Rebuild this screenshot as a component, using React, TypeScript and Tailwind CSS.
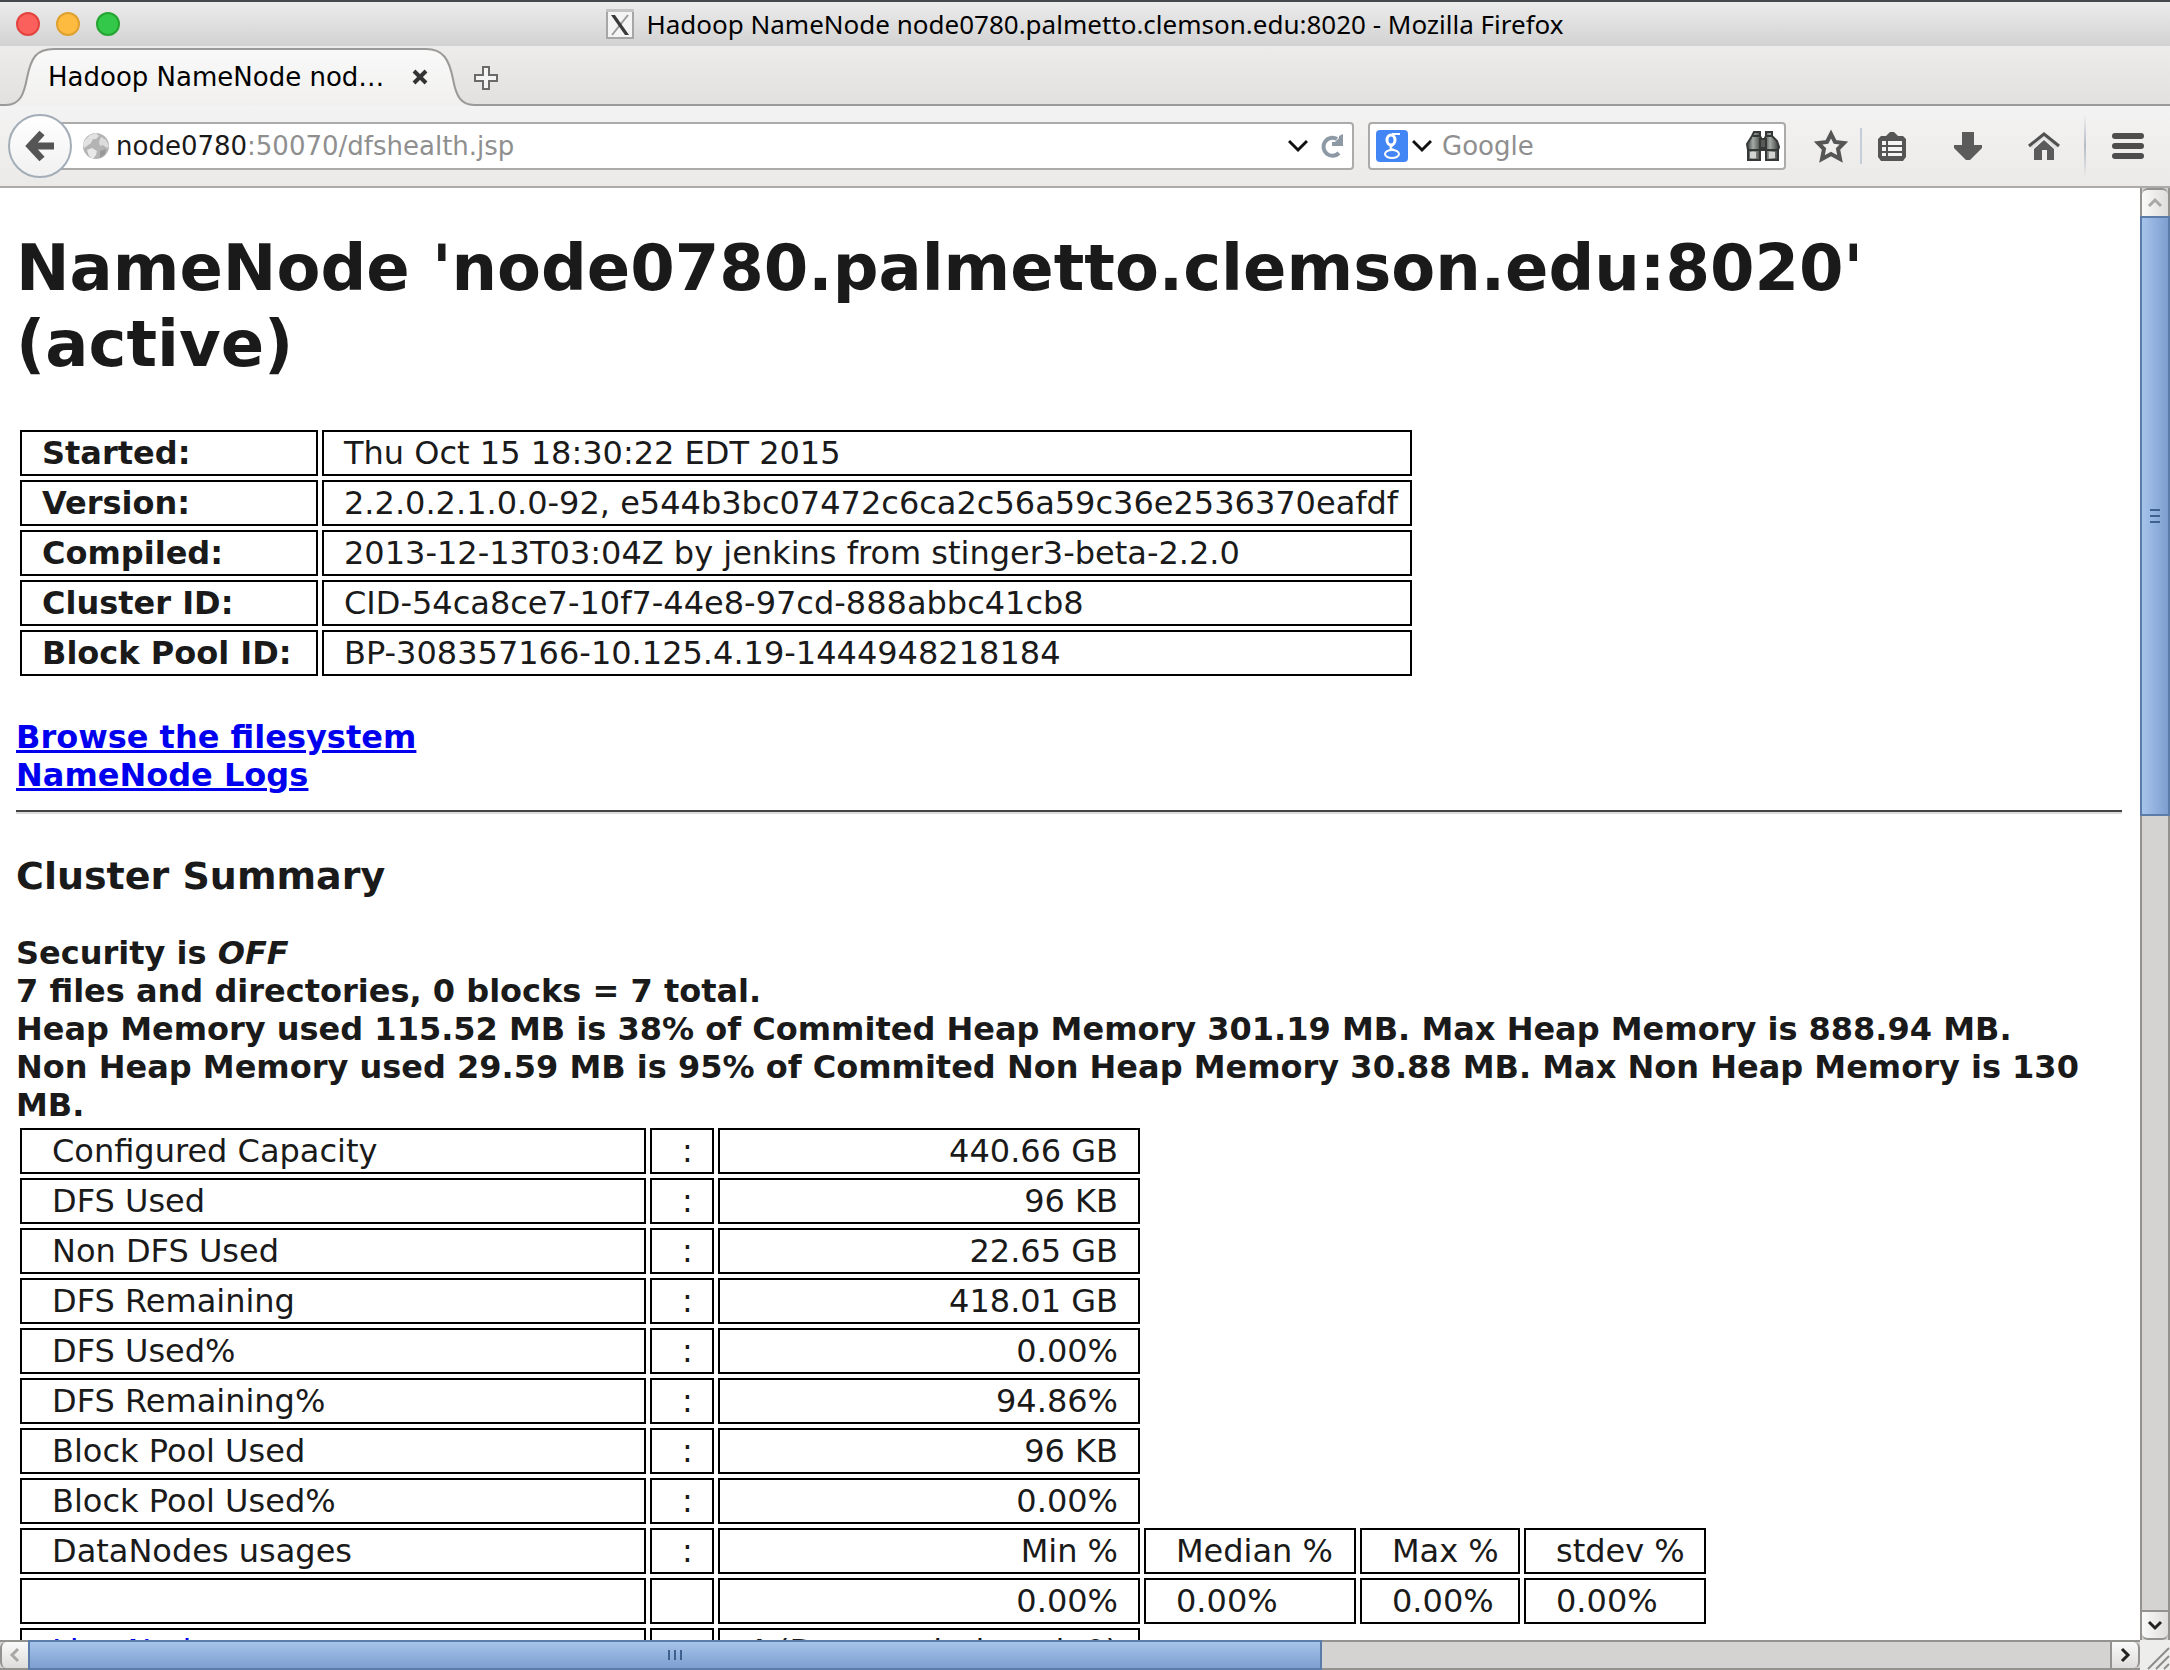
import React from "react";

const info: [string, string][] = [
  ["Started:", "Thu Oct 15 18:30:22 EDT 2015"],
  ["Version:", "2.2.0.2.1.0.0-92, e544b3bc07472c6ca2c56a59c36e2536370eafdf"],
  ["Compiled:", "2013-12-13T03:04Z by jenkins from stinger3-beta-2.2.0"],
  ["Cluster ID:", "CID-54ca8ce7-10f7-44e8-97cd-888abbc41cb8"],
  ["Block Pool ID:", "BP-308357166-10.125.4.19-1444948218184"],
];

const summary: string[][] = [
  ["Configured Capacity", ":", "440.66 GB"],
  ["DFS Used", ":", "96 KB"],
  ["Non DFS Used", ":", "22.65 GB"],
  ["DFS Remaining", ":", "418.01 GB"],
  ["DFS Used%", ":", "0.00%"],
  ["DFS Remaining%", ":", "94.86%"],
  ["Block Pool Used", ":", "96 KB"],
  ["Block Pool Used%", ":", "0.00%"],
  ["DataNodes usages", ":", "Min %", "Median %", "Max %", "stdev %"],
  ["", "", "0.00%", "0.00%", "0.00%", "0.00%"],
  ["Live Nodes", ":", "4 (Decommissioned: 0)"],
];

function TitleBar() {
  return (
    <header className="relative flex h-[46px] shrink-0 items-center justify-center border-t-2 border-[#45494d] bg-linear-to-b from-[#ececec] to-[#d2d2d2]">
      <div className="absolute left-4 flex gap-4">
        <button aria-label="Close window" className="size-6 rounded-full border-2 border-[#e2443f] bg-[#fc605c]" />
        <button aria-label="Minimize window" className="size-6 rounded-full border-2 border-[#dfa02f] bg-[#fdbc40]" />
        <button aria-label="Zoom window" className="size-6 rounded-full border-2 border-[#25a532] bg-[#34c84a]" />
      </div>
      <svg className="mr-3 h-[30px] w-7" viewBox="0 0 28 30" aria-hidden="true">
        <rect x="1" y="1" width="26" height="28" fill="#f4f4f4" stroke="#a6a6a6" strokeWidth="2" />
        <rect x="0" y="0" width="28" height="3" fill="#c4c4c4" />
        <path d="M22 6 6 26" stroke="#9a9a9a" strokeWidth="2" />
        <path d="M5 6h4l14 20h-4z" fill="#3a3a3a" />
      </svg>
      <h1 className="font-['Noto_Sans'] text-[26px] leading-8 text-black">
        Hadoop NameNode node0780.palmetto.clemson.edu:8020 - Mozilla Firefox
      </h1>
    </header>
  );
}

function TabStrip() {
  return (
    <nav className="flex h-[60px] shrink-0 border-b-2 border-[#9b9a99] bg-linear-to-b from-[#edecea] to-[#e2e1df]">
      <div className="relative h-[60px] w-[476px]">
        <svg className="absolute inset-0" width="476" height="60" viewBox="0 0 476 60" aria-hidden="true">
          <defs>
            <linearGradient id="tab" x1="0" y1="0" x2="0" y2="1">
              <stop offset="0" stopColor="#f9f9f9" />
              <stop offset="1" stopColor="#f1f0ef" />
            </linearGradient>
          </defs>
          <path
            d="M0 59H6C20 59 24 48 27 32C31 12 36 3 54 3H426C443 3 449 13 453 33C456 50 461 59 474 59V60H0Z"
            fill="url(#tab)"
          />
          <path
            d="M0 59H6C20 59 24 48 27 32C31 12 36 3 54 3H426C443 3 449 13 453 33C456 50 461 59 474 59H476"
            fill="none"
            stroke="#9b9a99"
            strokeWidth="2"
          />
        </svg>
        <div className="relative flex h-full items-center pl-12 pt-[2px]">
          <span className="w-[352px] whitespace-nowrap text-[26px] leading-8 text-black">Hadoop NameNode nod…</span>
          <button aria-label="Close tab" className="ml-3">
            <svg width="16" height="18" viewBox="0 0 16 18" aria-hidden="true">
              <path d="M2 3 14 15M14 3 2 15" stroke="#333" strokeWidth="4" />
            </svg>
          </button>
        </div>
      </div>
      <button aria-label="New tab" className="mt-[6px] -ml-[2px] self-center">
        <svg width="24" height="26" viewBox="0 0 24 26" aria-hidden="true">
          <path
            d="M9 2h6v8h8v6h-8v8H9v-8H1v-6h8z"
            fill="#f4f4f4"
            stroke="#6a6a6a"
            strokeWidth="2"
          />
        </svg>
      </button>
    </nav>
  );
}

function Chevron() {
  return (
    <svg width="20" height="14" viewBox="0 0 20 14" aria-hidden="true">
      <path d="M1 2 10 11 19 2" fill="none" stroke="#111" strokeWidth="3" />
    </svg>
  );
}

function Toolbar() {
  return (
    <div className="flex h-[82px] shrink-0 items-center border-b-2 border-[#acabaa] bg-linear-to-b from-[#f4f3f3] to-[#ebeae8] pl-2">
      <button
        aria-label="Back"
        className="relative z-10 flex size-16 shrink-0 items-center justify-center rounded-full border-2 border-[#a3adb8] bg-linear-to-b from-white to-[#f1f1f1]"
      >
        <svg width="30" height="32" viewBox="0 0 30 32" aria-hidden="true">
          <path d="M17 3 5 16 17 29M6 16H29" fill="none" stroke="#555" strokeWidth="7" />
        </svg>
      </button>
      <form className="-ml-4 flex h-12 min-w-0 flex-1 items-center rounded-r border-2 border-[#acabaa] bg-white pl-6 pr-2">
        <svg className="shrink-0" width="28" height="28" viewBox="0 0 28 28" aria-hidden="true">
          <circle cx="14" cy="14" r="13" fill="#b4b4b4" />
          <path d="M3 8 8 3 14 1 17 4 14 7 11 7 9 11 5 14 2 16 1 12Z" fill="#e2e2e2" />
          <path d="M19 5 24 8 27 14 25 16 21 13 18 14 17 10Z" fill="#dcdcdc" />
          <path d="M5 18 10 16 15 19 14 23 11 27 7 24Z" fill="#e8e8e8" />
          <path d="M18 19 24 17 23 22 18 26Z" fill="#989898" />
        </svg>
        <label className="relative ml-[6px] flex h-full min-w-0 flex-1 items-center text-[26px] leading-8">
          <span className="pointer-events-none absolute text-[#1a1a1a]">
            node0780<span className="text-[#8f8f8f]">:50070/dfshealth.jsp</span>
          </span>
          <input aria-label="Address" className="h-full w-full bg-transparent outline-none" />
        </label>
        <button type="button" aria-label="Show history">
          <Chevron />
        </button>
        <button type="button" aria-label="Reload" className="ml-3">
          <svg width="24" height="26" viewBox="0 0 24 26" aria-hidden="true">
            <path d="M19 20A9 9 0 1 1 17 6" fill="none" stroke="#8d99a5" strokeWidth="4" />
            <path d="M23 1V13H12V9H15L19 5V3Z" fill="#8d99a5" />
          </svg>
        </button>
      </form>
      <form className="ml-[14px] flex h-12 w-[418px] shrink-0 items-center rounded border-2 border-[#acabaa] bg-white pl-[6px] pr-1">
        <button type="button" aria-label="Choose search engine" className="flex items-center gap-1">
          <span className="flex size-8 items-center justify-center rounded-sm bg-[#4285f4]">
            <svg width="20" height="28" viewBox="0 0 20 28" fill="none" stroke="#fff" aria-hidden="true">
              <ellipse cx="9" cy="8" rx="4" ry="5" strokeWidth="3" />
              <path d="M10 2H18M11 13C7 15 8 17 12 18" strokeWidth="2" />
              <ellipse cx="10" cy="22" rx="7" ry="4" strokeWidth="2" />
            </svg>
          </span>
          <Chevron />
        </button>
        <input
          aria-label="Search"
          placeholder="Google"
          className="ml-[10px] min-w-0 flex-1 bg-transparent text-[26px] leading-8 outline-none placeholder:text-[#8f8f8f]"
        />
        <button type="button" aria-label="Find">
          <svg width="34" height="32" viewBox="0 0 34 32" aria-hidden="true">
            <defs>
              <linearGradient id="lens" x1="0" y1="0" x2="1" y2="0">
                <stop offset="0" stopColor="#3a3f3c" />
                <stop offset="0.4" stopColor="#a5aba6" />
                <stop offset="1" stopColor="#363936" />
              </linearGradient>
            </defs>
            <g stroke="#353836" strokeWidth="2">
              <path d="M8 2h6v4l2 4v10h-2v10H2V20l-1-6 5-8Z" fill="url(#lens)" />
              <path d="M20 2h6v4l5 5 2 6-1 3v10H20V20h-2V10l2-4Z" fill="url(#lens)" />
              <rect x="14" y="9" width="6" height="9" fill="#555a57" />
              <path d="M2 20H14M20 20H32M7 6h7M20 6h7" />
            </g>
            <path d="M4 22h6v6H4zM23 22h6v6h-6z" fill="#d2d5d2" />
          </svg>
        </button>
      </form>
      <div className="ml-6 flex shrink-0 items-center">
        <button aria-label="Bookmark this page" className="mx-1">
          <svg width="34" height="34" viewBox="0 0 34 34" aria-hidden="true">
            <path
              d="M17 5 21 13 30 14 24 20 26 30 17 25 8 30 10 20 4 14 13 13Z"
              fill="none"
              stroke="#555"
              strokeWidth="4"
            />
          </svg>
        </button>
        <div className="ml-2 h-9 w-[2px] bg-[#c5ced8]" />
        <button aria-label="Bookmarks" className="ml-4">
          <svg width="28" height="30" viewBox="0 0 28 30" aria-hidden="true">
            <path d="M3 5H8L12 1h4l4 4h5l3 3v18l-3 4H3l-3-4V8Z" fill="#555" />
            <path d="M4 10h4v4H4zM4 16h4v4H4zM4 22h4v3H4zM10 10h14v4H10zM10 16h14v4H10zM10 22h14v3H10z" fill="#f4f4f4" />
          </svg>
        </button>
        <button aria-label="Downloads" className="ml-12">
          <svg width="28" height="28" viewBox="0 0 28 28" aria-hidden="true">
            <path d="M8 0H20V13H28V16L16 28H12L0 16V13H8Z" fill="#5b5b5b" />
          </svg>
        </button>
        <button aria-label="Home" className="ml-[46px]">
          <svg width="32" height="30" viewBox="0 0 32 30" aria-hidden="true">
            <path d="M6 18 16 9 26 18V29H19V19H14V29H6Z" fill="#5b5b5b" />
            <path d="M3 17 16 6 29 17" fill="none" stroke="#dedede" strokeWidth="2" />
            <path d="M1 15 16 3 31 15" fill="none" stroke="#505050" strokeWidth="3" />
          </svg>
        </button>
        <div className="ml-6 h-16 w-[2px] bg-linear-to-b from-transparent via-[#b4bcc6] to-transparent" />
        <button aria-label="Open menu" className="mx-[26px] flex flex-col gap-1">
          <span className="h-[6px] w-8 rounded-sm bg-[#4d4d4d]" />
          <span className="h-[6px] w-8 rounded-sm bg-[#4d4d4d]" />
          <span className="h-[6px] w-8 rounded-sm bg-[#4d4d4d]" />
        </button>
      </div>
    </div>
  );
}

const cell = "h-[46px] border-2 border-black py-0 leading-[38px] whitespace-nowrap";

function cellPadding(column: number) {
  if (column === 1) return "pl-[30px] pr-4";
  if (column === 2) return "pr-5 text-right";
  return "pl-[30px] pr-[18px]";
}

function Page() {
  return (
    <main className="h-full min-w-0 flex-1 overflow-hidden bg-white pl-4 pr-[18px] pt-[42px] text-[32px] leading-[38px] text-[#1a1a1a]">
      <h1 className="text-[64px] font-bold leading-[76px]">
        NameNode 'node0780.palmetto.clemson.edu:8020' (active)
      </h1>
      <table className="mt-11 border-separate border-spacing-1">
        <tbody>
          {info.map(([k, v]) => (
            <tr key={k}>
              <th scope="row" className={`${cell} w-[298px] pl-5 pr-4 text-left font-bold`}>{k}</th>
              <td className={`${cell} w-[1089px] pl-5 pr-3`}>{v}</td>
            </tr>
          ))}
        </tbody>
      </table>
      <div className="mt-[38px] font-bold text-[#0000ee] underline">
        <a href="#browse">Browse the filesystem</a>
        <br />
        <a href="#logs">NameNode Logs</a>
      </div>
      <hr className="mt-4 border-t-2 border-b-2 border-t-[#444] border-b-[#dcdcdc]" />
      <h3 className="mt-10 text-[38px] font-bold leading-[44px]">Cluster Summary</h3>
      <div className="mt-9 font-bold">
        <p>Security is <em>OFF</em></p>
        <p>7 files and directories, 0 blocks = 7 total.</p>
        <p>Heap Memory used 115.52 MB is 38% of Commited Heap Memory 301.19 MB. Max Heap Memory is 888.94 MB.</p>
        <p>Non Heap Memory used 29.59 MB is 95% of Commited Non Heap Memory 30.88 MB. Max Non Heap Memory is 130 MB.</p>
      </div>
      <table className="border-separate border-spacing-1">
        <colgroup>
          <col className="w-[626px]" />
          <col className="w-16" />
          <col className="w-[422px]" />
          <col className="w-[212px]" />
          <col className="w-40" />
          <col className="w-[182px]" />
        </colgroup>
        <tbody>
          {summary.map((row, i) => (
            <tr key={i}>
              {row.map((t, j) => (
                <td key={j} className={`${cell} ${cellPadding(j)}`}>
                  {t === "Live Nodes" ? <a href="#live" className="text-[#0000ee] underline">{t}</a> : t}
                </td>
              ))}
            </tr>
          ))}
        </tbody>
      </table>
    </main>
  );
}

function Arrow({ d, color }: { d: string; color: string }) {
  return (
    <svg width="16" height="16" viewBox="0 0 16 16" aria-hidden="true">
      <path d={d} fill="none" stroke={color} strokeWidth="3" />
    </svg>
  );
}

function VerticalScrollbar() {
  return (
    <div className="flex h-full w-[30px] shrink-0 flex-col border-x-2 border-[#94928f] bg-[#d5d3d1]">
      <button aria-label="Scroll up" className="flex h-7 items-center justify-center rounded-t-md border-t-2 border-[#94928f] bg-linear-to-r from-[#fafafa] to-[#dedddb]">
        <Arrow d="M2 11 8 5 14 11" color="#aaa8a6" />
      </button>
      <div className="-mx-[2px] flex basis-[600px] flex-col items-center justify-center gap-1 border-2 border-[#5b7ca8] bg-linear-to-r from-[#a6c3ea] to-[#7d9fd0]">
        <span className="h-[2px] w-[10px] bg-[#3f618f]" />
        <span className="h-[2px] w-[10px] bg-[#3f618f]" />
        <span className="h-[2px] w-[10px] bg-[#3f618f]" />
      </div>
      <button aria-label="Scroll down" className="mt-auto flex h-[30px] items-center justify-center rounded-b-md border-y-2 border-[#94928f] bg-linear-to-r from-[#fafafa] to-[#dedddb]">
        <Arrow d="M2 5 8 11 14 5" color="#222" />
      </button>
    </div>
  );
}

function HorizontalScrollbar() {
  return (
    <div className="flex h-[30px] shrink-0">
      <div className="flex flex-1 border-y-2 border-[#94928f] bg-[#d5d3d1]">
        <button aria-label="Scroll left" className="flex w-7 items-center justify-center rounded-l-md border-l-2 border-[#94928f] bg-linear-to-b from-[#fafafa] to-[#dedddb]">
          <Arrow d="M11 2 5 8 11 14" color="#aaa8a6" />
        </button>
        <div className="-my-[2px] flex basis-[1294px] items-center justify-center gap-1 border-2 border-[#5b7ca8] bg-linear-to-b from-[#a6c3ea] to-[#7d9fd0]">
          <span className="h-[10px] w-[2px] bg-[#3f618f]" />
          <span className="h-[10px] w-[2px] bg-[#3f618f]" />
          <span className="h-[10px] w-[2px] bg-[#3f618f]" />
        </div>
        <button aria-label="Scroll right" className="ml-auto flex w-[30px] items-center justify-center rounded-r-md border-x-2 border-[#94928f] bg-linear-to-b from-[#fafafa] to-[#dedddb]">
          <Arrow d="M5 2 11 8 5 14" color="#222" />
        </button>
      </div>
      <div className="flex w-[30px] items-end justify-end bg-[#ededeb]">
        <svg width="24" height="24" viewBox="0 0 24 24" aria-hidden="true">
          <path d="M2 23 23 2M10 23 23 10M18 23 23 18" stroke="#8c8c8c" strokeWidth="2" />
        </svg>
      </div>
    </div>
  );
}

export default function App() {
  return (
    <div className="flex h-screen flex-col overflow-hidden font-['DejaVu_Sans',sans-serif]">
      <TitleBar />
      <TabStrip />
      <Toolbar />
      <div className="flex min-h-0 flex-1">
        <Page />
        <VerticalScrollbar />
      </div>
      <HorizontalScrollbar />
    </div>
  );
}
